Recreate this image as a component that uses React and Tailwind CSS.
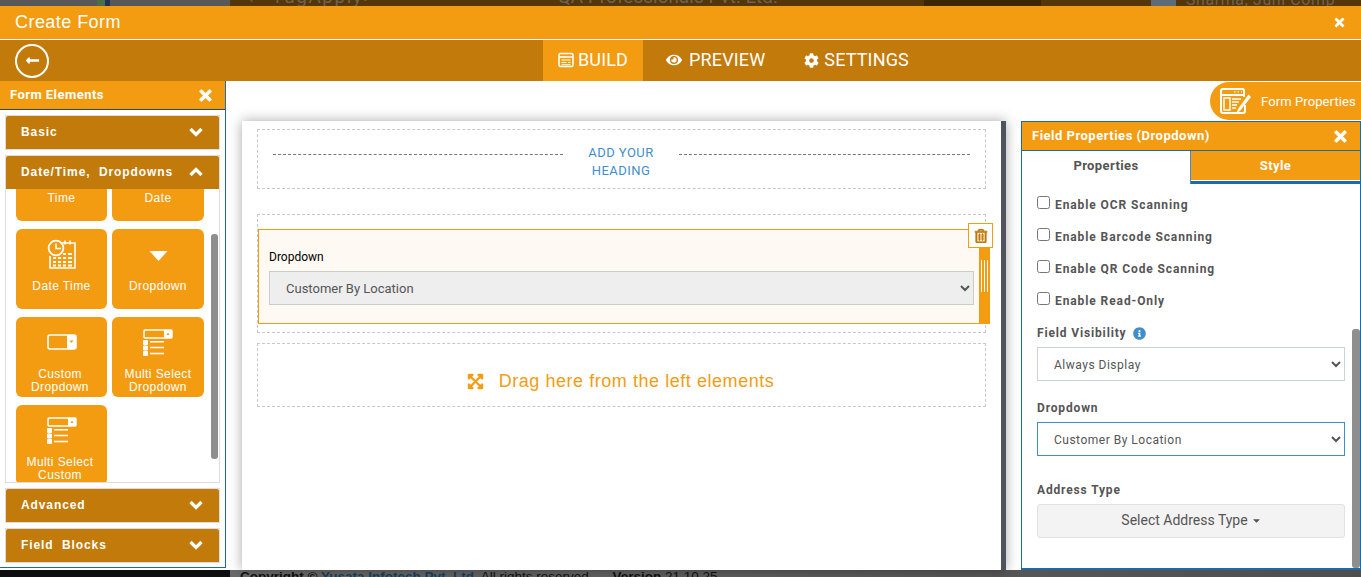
import React from 'react';
import {
    FaTimes,
    FaEye,
    FaCog,
    FaInfoCircle,
    FaRegTrashAlt,
    FaExpandArrowsAlt,
    FaLongArrowAltLeft,
    FaCaretDown,
} from 'react-icons/fa';

const roboto = { fontFamily: 'Roboto, sans-serif' };

function BuildIcon() {
    return (
        <svg width="16" height="16" viewBox="0 0 16 16" fill="none" stroke="currentColor">
            <rect x="1" y="1.5" width="14" height="13" rx="1.5" strokeWidth="1.6" />
            <path d="M1 5h14" strokeWidth="1.6" />
            <path d="M3.500 8h9M3.500 10.500h5M10 10.500h2.500M3.500 12.700h9" strokeWidth="1.1" />
        </svg>
    );
}

function Chevron({ up }) {
    return (
        <svg width="14" height="10" viewBox="0 0 14 10" fill="none" stroke="white" strokeWidth="3.2">
            <path d={up ? 'M1.500 8L7 2.500 12.500 8' : 'M1.500 2L7 7.500 12.500 2'} />
        </svg>
    );
}

function DateTimeIcon() {
    return (
        <svg width="31" height="31" viewBox="0 0 31 31" fill="none" stroke="white">
            <path d="M14 4h15v25H4v-12" strokeWidth="1.6" />
            <path d="M19 1.500v4M24 1.500v4" strokeWidth="1.6" />
            <circle cx="10" cy="9" r="7.400" strokeWidth="1.8" fill="#f39c12" />
            <path d="M10 4.500V9.500H15" strokeWidth="1.6" />
            <path d="M7 19h3M12 19h3M17 19h3M22 19h4M7 23h3M12 23h3M17 23h3M22 23h4M7 26.500h3M12 26.500h3M17 26.500h3M22 26.500h4M22 15h4M17 15h3" strokeWidth="2" />
        </svg>
    );
}

function CaretIcon() {
    return (
        <svg width="19" height="10" viewBox="0 0 19 10" className="mt-[2px]">
            <path d="M0.500 0H18.500L9.500 10Z" fill="white" />
        </svg>
    );
}

function CustomDropdownIcon() {
    return (
        <svg width="30" height="16" viewBox="0 0 30 16" fill="none" className="-mt-[2px]">
            <rect x="1" y="1" width="28" height="14" rx="2" stroke="white" strokeWidth="1.6" />
            <rect x="20" y="1" width="9" height="14" rx="1" fill="white" />
            <path d="M22.500 6.500h4L24.500 9Z" fill="#f39c12" />
        </svg>
    );
}

function MultiSelectIcon() {
    return (
        <svg width="30" height="27" viewBox="0 0 30 27" fill="none">
            <rect x="1" y="1" width="28" height="8" rx="1" stroke="white" strokeWidth="1.5" />
            <rect x="21" y="1" width="8" height="8" fill="white" />
            <path d="M23.500 6h3L25 3.500Z" fill="#f39c12" />
            <rect x="0" y="11" width="5" height="5" rx="1" fill="white" />
            <rect x="0" y="16.500" width="5" height="5" rx="1" fill="white" />
            <rect x="0" y="22" width="5" height="5" rx="1" fill="white" />
            <path d="M7 12.800h14M7 18.500h14M7 24.500h14" stroke="white" strokeWidth="1.4" />
        </svg>
    );
}

function FormPropertiesIcon() {
    return (
        <svg width="32" height="26" viewBox="0 0 32 26" fill="none">
            <path d="M24 9V2.500a1.500 1.500 0 0 0-1.500-1.500H3A2 2 0 0 0 1 3v20a2 2 0 0 0 2 2h20a2 2 0 0 0 2-2v-6" stroke="white" strokeWidth="2" />
            <path d="M1 7h23" stroke="white" strokeWidth="2" />
            <path d="M14 3.800h1.500M17.500 3.800h1.500M21 3.800h1" stroke="white" strokeWidth="1.200" />
            <rect x="4" y="10" width="6" height="12" stroke="white" strokeWidth="1.500" />
            <path d="M12 11h9M12 14h7M12 17h5M12 20h4" stroke="white" strokeWidth="1.500" />
            <path d="M18 21l-1.500 4 3.500-2L31 9l-2.500-2.500Z" fill="white" />
        </svg>
    );
}

function Tile({ icon, label, twoLine }) {
    return (
        <div className="h-20 bg-[#f39c12] rounded-md flex flex-col items-center text-white overflow-hidden">
            <div className="h-[50px] pt-[9px] pb-[8px] flex items-center justify-center shrink-0 w-full">{icon}</div>
            <div className={`text-xs leading-[13px] tracking-[0.4px] text-center pt-[1px] whitespace-nowrap font-['Liberation_Sans',sans-serif] ${twoLine ? 'pr-[3px]' : ''}`}>{label}</div>
        </div>
    );
}

function AccordionHead({ label, open }) {
    return (
        <div className="h-[33px] bg-[#c27a0a] rounded-t-[2px] flex items-center justify-between pl-[15px] pr-[16px] pb-[1px] text-white">
            <span className="text-xs font-bold tracking-[0.9px] whitespace-pre font-['Liberation_Sans',sans-serif]">{label}</span>
            <Chevron up={open} />
        </div>
    );
}

function Accordion({ label }) {
    return (
        <div className="border border-[#dddddd] mx-[5px]">
            <AccordionHead label={label} />
        </div>
    );
}

function Sidebar() {
    return (
        <aside className="w-[226px] shrink-0 h-[487px] border-r border-b border-[#1a6ba8] flex flex-col">
            <div className="h-[29px] bg-[#f39c12] border-b border-[#2a4a60] flex items-center justify-between pl-[10px] pr-[11px] text-white">
                <span className="text-[13px] font-bold tracking-[0.45px]">Form Elements</span>
                <FaTimes size={17} stroke="currentColor" strokeWidth={20} />
            </div>
            <div className="pt-[5px] flex flex-col gap-[5px]">
                <Accordion label="Basic" />
                <div className="border border-[#dddddd] mx-[5px]">
                    <AccordionHead label="Date/Time,  Dropdowns" open />
                    <div className="h-[293px] overflow-hidden flex">
                        <div className="w-[193px] ml-[10px] shrink-0">
                            <div className="grid grid-cols-[91px_92px] gap-x-[5px] gap-y-2 -mt-[48px]">
                                <Tile icon={null} label="Time" />
                                <Tile icon={null} label="Date" />
                                <Tile icon={<DateTimeIcon />} label="Date Time" />
                                <Tile icon={<CaretIcon />} label="Dropdown" />
                                <Tile icon={<CustomDropdownIcon />} label={<>Custom<br />Dropdown</>} twoLine />
                                <Tile icon={<MultiSelectIcon />} label={<>Multi Select<br />Dropdown</>} />
                                <Tile icon={<MultiSelectIcon />} label={<>Multi Select<br />Custom</>} twoLine />
                            </div>
                        </div>
                        <div className="w-[7px] h-[225px] mt-[45px] ml-[2px] rounded-[3px] bg-[#8e8e8e] shrink-0" />
                    </div>
                </div>
                <Accordion label="Advanced" />
                <Accordion label="Field  Blocks" />
            </div>
        </aside>
    );
}

function DashedBox({ className = '', children }) {
    return <div className={`border border-dashed border-[#c8c8c8] ${className}`}>{children}</div>;
}

function Canvas() {
    return (
        <div className="w-[764px] h-[449px] mt-[40px] ml-[16px] shrink-0 bg-white border-r-[5px] border-[#4e535e] shadow-[0_0_12px_rgba(0,0,0,0.35)] pt-2 pl-[15px] pr-[15px]">
            <DashedBox className="w-[729px] h-[60px] flex items-start pl-[15px] pr-[15px]">
                <div className="w-[290px] border-t border-dashed border-[#777777] mt-[24px]" />
                <div className="w-[116px] text-center text-[13px] leading-[18px] tracking-[0.45px] text-[#3f8fcc] mt-[14px]">
                    ADD YOUR<br />HEADING
                </div>
                <div className="flex-1 border-t border-dashed border-[#777777] mt-[24px]" />
            </DashedBox>
            <DashedBox className="w-[729px] h-[119px] mt-[25px] pt-[14px] relative">
                <div className="w-[722px] h-[95px] bg-[#fff9f3] border border-[#f39c12] pl-[10px] pt-[20px]">
                    <div className="text-xs leading-[14px] text-black">Dropdown</div>
                    <select className="block mt-[7px] w-[705px] h-[34px] bg-[#eeeeee] border border-[#cccccc] text-[13px] text-[#555555] pl-[12px]">
                        <option>Customer By Location</option>
                    </select>
                </div>
                <div className="absolute left-[721px] top-[33px] w-[11px] h-[76px] bg-[#f39c12] flex justify-center gap-[2px] pt-[12px]">
                    <div className="w-px h-8 bg-white" />
                    <div className="w-px h-8 bg-white" />
                    <div className="w-px h-8 bg-white" />
                </div>
                <div className="absolute left-[710px] top-[8px] w-[25px] h-[25px] bg-white border border-[#f39c12] flex items-center justify-center text-[#c27a0a]">
                    <FaRegTrashAlt size={14} stroke="currentColor" strokeWidth={25} />
                </div>
            </DashedBox>
            <DashedBox className="w-[729px] h-[64px] mt-[10px] flex items-center justify-center gap-[15px] text-[#f39c12] pt-[12px] pr-[2px]">
                <FaExpandArrowsAlt size={17} stroke="currentColor" strokeWidth={15} />
                <span className="text-lg tracking-[0.55px] font-['Liberation_Sans',sans-serif]">Drag here from the left elements</span>
            </DashedBox>
        </div>
    );
}

function CheckRow({ label }) {
    return (
        <label className="h-8 flex items-start gap-[5px] text-xs font-bold tracking-[0.9px] text-[#555555]">
            <input type="checkbox" className="w-[13px] h-[13px] mt-[1px]" readOnly />
            <span className="leading-[16px] mt-[2px]">{label}</span>
        </label>
    );
}

function FieldProperties() {
    return (
        <div className="w-[340px] h-[449px] mt-[40px] ml-[15px] border border-b-2 border-[#1a6ba8] flex flex-col shrink-0">
            <div className="h-[29px] shrink-0 bg-[#f39c12] border-b border-[#1a6ba8] flex items-center justify-between pl-[10px] pr-[11px] text-white">
                <span className="text-[13px] font-bold tracking-[0.5px]">Field Properties (Dropdown)</span>
                <FaTimes size={17} stroke="currentColor" strokeWidth={20} />
            </div>
            <div className="h-[33px] shrink-0 flex text-[13px] font-bold tracking-[0.4px]">
                <div className="w-[169px] flex items-center justify-center text-[#555555] pb-[3px] border-r border-[#3f8fcc]">Properties</div>
                <div className="flex-1 bg-[#f39c12] text-white flex items-center justify-center pb-[1px] border-b-[3px] border-b-[#1a6ba8] shadow-[inset_0_-1px_0_white]">Style</div>
            </div>
            <div className="flex-1 flex min-h-0">
                <div className="w-[330px] pl-[15px] pt-[11px] shrink-0">
                    <CheckRow label="Enable OCR Scanning" />
                    <CheckRow label="Enable Barcode Scanning" />
                    <CheckRow label="Enable QR Code Scanning" />
                    <CheckRow label="Enable Read-Only" />
                    <div className="mt-[1px] pt-[1px] flex items-center gap-[6px] text-xs font-bold tracking-[0.85px] text-[#555555] leading-4">
                        Field Visibility <FaInfoCircle size={13} className="text-[#3f8fcc]" />
                    </div>
                    <select className="block mt-[6px] w-[308px] h-[34px] border border-[#ccd3dc] bg-white text-xs tracking-[0.5px] text-[#555555] pl-[12px] pt-[2px]">
                        <option>Always Display</option>
                    </select>
                    <div className="mt-[19px] text-xs font-bold tracking-[0.85px] text-[#555555] leading-4">Dropdown</div>
                    <select className="block mt-[6px] w-[308px] h-[34px] border border-[#3f8fcc] bg-white text-xs tracking-[0.5px] text-[#555555] pl-[12px] pt-[2px]">
                        <option>Customer By Location</option>
                    </select>
                    <div className="mt-[26px] text-xs font-bold tracking-[0.85px] text-[#555555] leading-4">Address Type</div>
                    <div className="mt-[6px] w-[308px] h-[34px] bg-[#f3f3f3] border border-[#e2e2e2] rounded-[3px] flex items-center justify-center gap-[3px] pb-[2px] pl-[1px] text-sm text-[#555555]">
                        Select Address Type <FaCaretDown size={11} />
                    </div>
                </div>
                <div className="w-2 h-[239px] mt-[145px] rounded-[3px] bg-[#8e8e8e]" />
            </div>
        </div>
    );
}

export default function App() {
    return (
        <div className="w-full h-[577px] flex flex-col overflow-hidden bg-white" style={roboto}>
            {/* darkened page behind the dialog, only slivers show */}
            <div className="h-[6px] shrink-0 flex overflow-hidden">
                <div className="w-[230px] bg-[#585858] flex pl-[97px]">
                    <div className="w-[8px] h-full bg-[#4a6e4a]" />
                    <div className="w-[5px] h-full bg-[#1c3555]" />
                </div>
                <div className="flex-1 bg-[#55350a] text-[#6e6250] text-[19px] leading-none whitespace-nowrap flex">
                    <span className="ml-[18px] -mt-[13px]">‹</span>
                    <span className="ml-[18px] -mt-[13px] tracking-[1.5px]">YugApply&gt;</span>
                    <span className="ml-[183px] -mt-[13px]">QA Professionals Pvt. Ltd.</span>
                    <div className="ml-[146px] w-[117px] h-full bg-[#3d2606] shrink-0" />
                    <div className="ml-[110px] w-[25px] h-full bg-[#5d6a78] shrink-0" />
                    <span className="ml-[10px] -mt-[12px] text-base tracking-[0.6px]">Sharma, Juhi Comp</span>
                </div>
            </div>
            <div className="h-[34px] shrink-0 bg-[#f39c12] border-b border-white flex items-center justify-between pl-[15px] pr-[15px] text-white">
                <span className="text-lg tracking-[0.45px] pb-[1px] font-['Liberation_Sans',sans-serif]">Create Form</span>
                <FaTimes size={13} stroke="currentColor" strokeWidth={20} />
            </div>
            <div className="h-[41px] shrink-0 bg-[#c27a0a] flex items-center text-white text-lg tracking-[0.15px] pb-[1px]">
                <div className="ml-[15px] w-[34px] h-[34px] rounded-full border-2 border-white flex items-center justify-center mt-[1px]">
                    <FaLongArrowAltLeft size={15} />
                </div>
                <div className="ml-[494px] w-[100px] h-[41px] mt-[1px] bg-[#f39c12] flex items-center justify-center gap-[4px] pb-[1px]">
                    <BuildIcon /> BUILD
                </div>
                <div className="ml-[23px] flex items-center gap-[7px]">
                    <FaEye size={16} /> PREVIEW
                </div>
                <div className="ml-[39px] flex items-center gap-[5px]">
                    <FaCog size={15} /> SETTINGS
                </div>
            </div>
            <div className="flex-1 min-h-0 flex relative">
                <Sidebar />
                <Canvas />
                <FieldProperties />
                <div className="absolute right-0 top-[1px] w-[151px] h-[38px] bg-[#f39c12] rounded-l-[19px] flex items-center pl-[10px] text-white">
                    <FormPropertiesIcon />
                    <span className="ml-[9px] text-[13px] tracking-[0.1px] pt-[2px]">Form Properties</span>
                </div>
            </div>
            <div className="h-[7px] shrink-0 flex overflow-hidden text-[13.5px] leading-none whitespace-nowrap">
                <div className="w-[230px] bg-[#0b0f0f]" />
                <div className="flex-1 bg-gradient-to-r from-[#6a6a6a] to-[#4e4e4e] text-[#111111] pl-[10px] font-['Liberation_Sans',sans-serif]">
                    <span className="font-bold">Copyright © <span className="text-[#1c3f5a]">Yusata Infotech Pvt. Ltd.</span></span> All rights reserved.
                    <span className="font-bold ml-[20px]">Version</span> 21.10.25
                </div>
            </div>
        </div>
    );
}
